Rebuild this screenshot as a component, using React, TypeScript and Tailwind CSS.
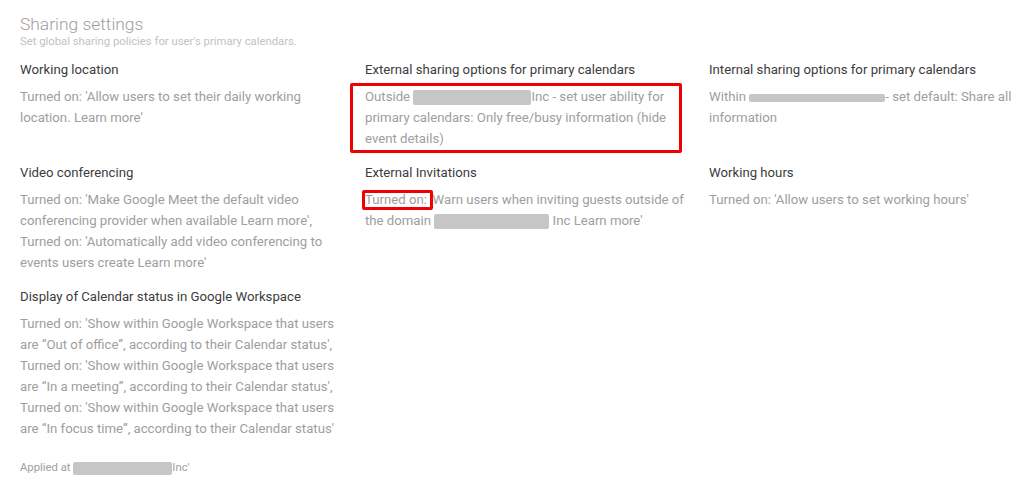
import React from "react";

function Blur({ w, h = 15 }: { w: string; h?: string | number }) {
  return (
    <span
      className={`inline-block align-middle bg-[#c6c6c6] rounded-[2px] ${w} ${
        h === 8 ? "h-[8px]" : h === 13 ? "h-[13px]" : "h-[15px]"
      }`}
    />
  );
}

function Section({
  title,
  children,
}: {
  title: string;
  children: React.ReactNode;
}) {
  return (
    <div className="pb-[14px]">
      <h3 className="text-[13.2px] leading-5 text-[#3c3c3c]">{title}</h3>
      <div className="mt-[6px] max-w-[325px] text-[13.2px] leading-[21px] text-[#9e9e9e]">
        {children}
      </div>
    </div>
  );
}

export default function App() {
  return (
    <div
      className="w-[1024px] h-[500px] bg-white px-[20px] pt-[13px] overflow-hidden"
      style={{ fontFamily: "Roboto, 'Liberation Sans', sans-serif" }}
    >
      <h1 className="text-[17.4px] leading-[22px] font-light text-[#9e9e9e]">
        Sharing settings
      </h1>
      <p className="text-[11.3px] leading-[14px] text-[#c2c2c2]">
        Set global sharing policies for user's primary calendars.
      </p>

      <div className="mt-[11px] grid grid-cols-[345px_344px_325px]">
        <Section title="Working location">
          Turned on: 'Allow users to set their daily working location. Learn
          more'
        </Section>

        <Section title="External sharing options for primary calendars">
          <div className="relative">
            Outside <Blur w="w-[118px]" />
            Inc - set user ability for primary calendars: Only free/busy
            information (hide event details)
            <span className="absolute -left-[15px] right-[8px] -top-[3px] -bottom-[4px] border-[3px] border-[#f00000] rounded-[2px]" />
          </div>
        </Section>

        <Section title="Internal sharing options for primary calendars">
          Within <Blur w="w-[136px]" h={8} />- set default: Share all
          information
        </Section>

        <Section title="Video conferencing">
          Turned on: 'Make Google Meet the default video conferencing provider
          when available Learn more', Turned on: 'Automatically add video
          conferencing to events users create Learn more'
        </Section>

        <Section title="External Invitations">
          <span className="relative">
            Turned on:
            <span className="absolute -left-[3px] -right-[6px] -top-[2px] -bottom-[3px] border-[3px] border-[#f00000] rounded-[2px]" />
          </span>{" "}
          'Warn users when inviting guests outside of the domain{" "}
          <Blur w="w-[115px]" /> Inc Learn more'
        </Section>

        <Section title="Working hours">
          Turned on: 'Allow users to set working hours'
        </Section>

        <Section title="Display of Calendar status in Google Workspace">
          Turned on: 'Show within Google Workspace that users are “Out of
          office”, according to their Calendar status', Turned on: 'Show within
          Google Workspace that users are “In a meeting”, according to their
          Calendar status', Turned on: 'Show within Google Workspace that users
          are “In focus time”, according to their Calendar status'
        </Section>
      </div>

      <p className="mt-[8px] text-[11.3px] leading-[14px] text-[#9e9e9e]">
        Applied at <Blur w="w-[99px]" h={13} />
        Inc'
      </p>
    </div>
  );
}
